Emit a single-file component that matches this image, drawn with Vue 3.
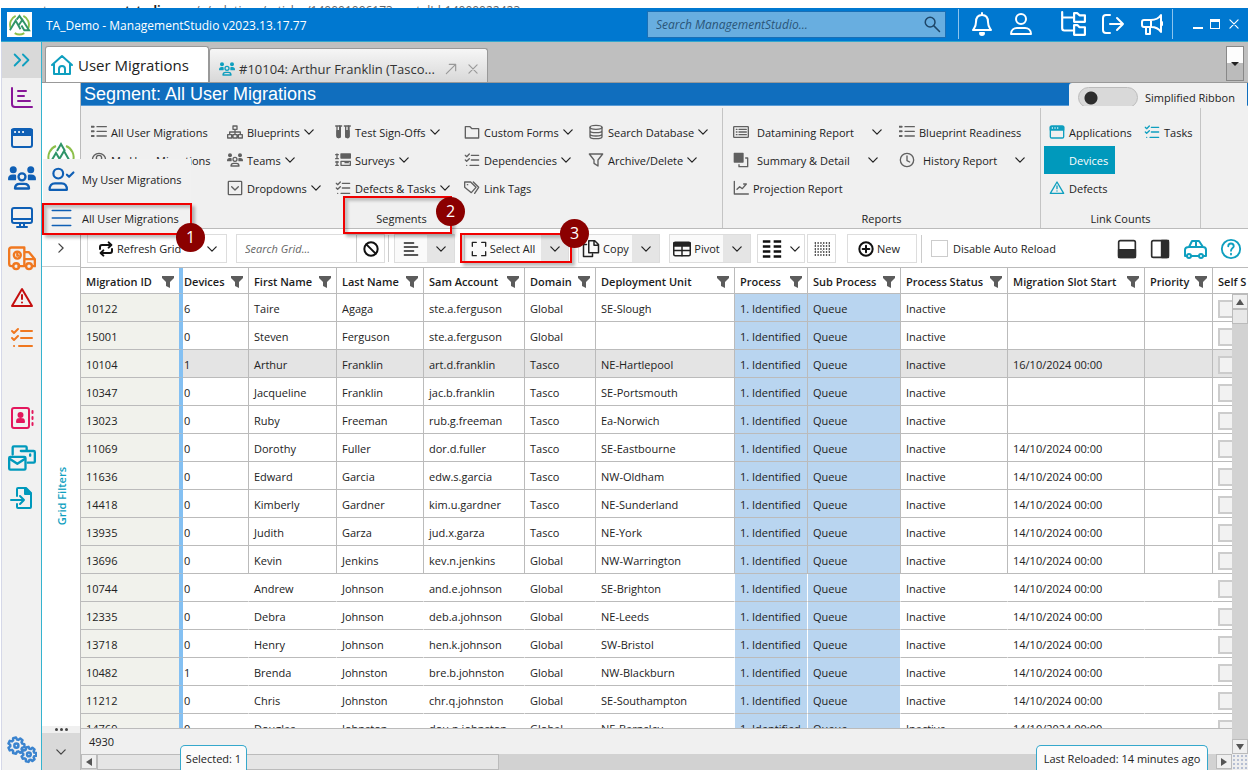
<script setup>
import { ref } from 'vue'

function gear(cx, cy, r) {
  const teeth = 7
  const step = (Math.PI * 2) / teeth
  const points = []
  for (let n = 0; n < teeth; n++) {
    for (const [offset, radius] of [[-0.36, r * 0.76], [-0.2, r], [0.2, r], [0.36, r * 0.76]]) {
      const a = (n + offset) * step
      points.push((cx + radius * Math.cos(a)).toFixed(1) + ' ' + (cy + radius * Math.sin(a)).toFixed(1))
    }
  }
  return `<path d="M${points.join('L')}z"/><circle cx="${cx}" cy="${cy}" r="${r * 0.25}"/>`
}

const icons = {
  chevrons: '<path d="M4 6l6 6-6 6M13 6l6 6-6 6"/>',
  chart: '<path d="M2 2v16a3 3 0 0 0 3 3h17M8 5h8M8 10h6M8 15h12"/>',
  window: '<rect x="2" y="3" width="20" height="18" rx="2"/><path d="M2 4h20v5H2z" fill="currentColor"/><path d="M5 6h.1M9 6h.1M13 6h.1" stroke="#fff"/>',
  users: '<circle cx="12" cy="11" r="3"/><path d="M6 21c0-3 2-4 4-4h4c2 0 4 1 4 4z"/><circle cx="4.500" cy="5" r="2" fill="currentColor"/><circle cx="19.500" cy="5" r="2" fill="currentColor"/><path d="M1 13c0-2 1-3 3-3h2v3zM23 13c0-2-1-3-3-3h-2v3z" fill="currentColor"/>',
  monitor: '<rect x="2" y="2" width="20" height="15" rx="2"/><path d="M2 13h20M10 17v4M14 17v4M7 21h10"/>',
  truck: '<path d="M4 19H3a2 2 0 0 1-2-2V5a2 2 0 0 1 2-2h11v16H9M14 7h4l5 6v6h-2M14 13h9"/><circle cx="7" cy="19" r="2.500"/><circle cx="18" cy="19" r="2.500"/><circle cx="8" cy="9.500" r="3"/><path d="M8 8v2h1"/>',
  warning: '<path d="M12 3L2 20h20z"/><path d="M12 9v4M12 16.500v.1"/>',
  tasks: '<path d="M2 5l2 2 4-4M2 12l2 2 4-4M11 5h11M11 12h11M4 20h.1M9 20h13"/>',
  book: '<rect x="2" y="2" width="17" height="20" rx="2"/><circle cx="10.500" cy="9" r="2" fill="currentColor"/><path d="M7 16c0-3 1-3 3.500-3s3.500 0 3.500 3z" fill="currentColor"/><path d="M22.500 5v2M22.500 11v2M22.500 17v2"/>',
  mails: '<path d="M4 9V3a1 1 0 0 1 1-1h10a1 1 0 0 1 1 1v2M11 6h11a1 1 0 0 1 1 1v8a1 1 0 0 1-1 1h-5M19 9v1"/><rect x="1" y="11" width="14" height="11" rx="1"/><path d="M2 13l6 4 6-4"/>',
  fileIn: '<path d="M7 10V3a1 1 0 0 1 1-1h8l5 5v14a1 1 0 0 1-1 1H8a1 1 0 0 1-1-1v-3M1 14h13M10 10l4 4-4 4"/><path d="M15 2v6h6z" fill="currentColor"/>',
  gears: gear(7.5, 8.5, 6.5) + gear(17.5, 15.5, 6),
  home: '<path d="M2 12L12 3l10 9M4 11v10h16V11M9 21v-5a3 3 0 0 1 6 0v5"/>',
  popout: '<path d="M4 20L20 4M9 4h11v11"/>',
  cross: '<path d="M5 5l14 14M19 5L5 19"/>',
  search: '<circle cx="9.500" cy="9.500" r="6.500"/><path d="M14.500 14.500L22 22"/>',
  bell: '<path d="M12 3c-4 0-6 3-6 7 0 5-2 6-3 8h18c-1-2-3-3-3-8 0-4-2-7-6-7zM12 1v2"/><path d="M10 21a2 2 0 0 0 4 0z" fill="currentColor"/>',
  person: '<circle cx="12" cy="7" r="5"/><path d="M2 22c0-4 3-6 6-6h8c3 0 6 2 6 6z"/>',
  tree: '<path d="M2 1v15a2 2 0 0 0 2 2h8M2 6h10"/><path d="M13 2h3l2 2h5v6H13zM13 13h3l2 2h5v7H13z"/>',
  exit: '<path d="M9 3H5a3 3 0 0 0-3 3v12a3 3 0 0 0 3 3h4M9 12h13M16 6l6 6-6 6"/>',
  horn: '<path d="M4 8h7c5 0 8-2 10-5v17c-2-3-5-5-10-5H4a2 2 0 0 1-2-2v-3a2 2 0 0 1 2-2zM11 8v7M6 15v7h4v-7M22 10v3"/>',
  list: '<path d="M9 4h14M9 11h14M9 18h14"/><path d="M1 4h3M1 11h3M1 18h3" stroke-width="3"/>',
  userRing: '<circle cx="12" cy="12" r="10"/><circle cx="12" cy="9" r="4"/><path d="M5 19c2-5 12-5 14 0"/>',
  sitemap: '<path d="M9 3h6v5H9zM12 8v4M4 16v-4h16v4M12 12v4M1 16h6v5H1zM9 16h6v5H9zM17 16h6v5h-6z"/>',
  dropbox: '<rect x="2" y="2" width="20" height="20" rx="1"/><path d="M7 10l5 5 5-5"/>',
  tubes: '<path d="M1 3h9M14 3h9M3 3v15a2.500 2.500 0 0 0 5 0V3M16 3v15a2.500 2.500 0 0 0 5 0V3"/><path d="M3 10h5v8a2 2 0 0 1-5 0zM16 10h5v8a2 2 0 0 1-5 0zM7 3v8M20 3v8" fill="currentColor"/>',
  survey: '<path d="M1 4h4M1 10h4M3 3v6M1 15h4M1 20h4M3 14v6"/><rect x="9" y="3" width="14" height="6" fill="currentColor"/><rect x="9" y="14" width="14" height="6"/><path d="M15 16h5" />',
  folder: '<path d="M2 4h7l3 3h10v14H2z"/>',
  tags: '<path d="M1 3h9l8 8-7 8L1 11zM14 3l8 8-6 9"/><path d="M5 7h.5"/>',
  database: '<ellipse cx="12" cy="5" rx="9" ry="3"/><path d="M3 5v14c0 4 18 4 18 0V5M3 10c0 4 18 4 18 0M3 15c0 4 18 4 18 0"/>',
  funnel: '<path d="M2 3h20l-7 9v9l-6-4v-5z"/>',
  report: '<rect x="1" y="4" width="22" height="16" rx="1"/><path d="M5 8h1M5 12h1M5 16h1M9 8h11M9 12h11M9 16h11"/>',
  clone: '<rect x="2" y="2" width="13" height="13" fill="currentColor"/><path d="M19 9h3v13H9v-3"/>',
  line: '<path d="M2 2v19h21M6 14l4-4 4 3 6-7M16 6h4"/>',
  clock: '<circle cx="12" cy="12" r="10"/><path d="M12 6v7l4 2"/>',
  userCheck: '<circle cx="9" cy="7" r="4.500"/><path d="M1 22c0-4 2-6 5-6h6c3 0 5 2 5 6zM17 8l2 2 4-4"/>',
  lines: '<path d="M1 3h22M1 12h22M1 21h22"/>',
  refresh: '<path d="M3 12V9c0-2 1-3 3-3h13M16 2l4 4-4 4M21 12v3c0 2-1 3-3 3H5M8 14l-4 4 4 4"/>',
  ban: '<circle cx="12" cy="12" r="10"/><path d="M5 5l14 14"/>',
  align: '<path d="M2 3h14M2 9h20M2 15h14M2 21h20"/>',
  expand: '<path d="M2 8V2h6M16 2h6v6M22 16v6h-6M8 22H2v-6"/>',
  copy: '<path d="M9 1h8l5 5v11H9zM16 1v6h6M6 6H2v16h12v-3"/>',
  grid: '<rect x="1" y="3" width="22" height="18" rx="2"/><path d="M1 4h22v4H1z" fill="currentColor"/><path d="M12 5v16M1 14h22"/>',
  columns: '<path d="M1 3h9M1 9h9M1 15h9M1 21h9M14 3h9M14 9h9M14 15h9M14 21h9" stroke-linecap="butt"/>',
  dots: '<g stroke-linecap="butt" stroke-width="2"><path d="M1 3h23M1 7.500h23M1 12h23M1 16.500h23M1 21h23" stroke-dasharray="2 2.200"/><path d="M2 5.500h23M2 14.500h23" stroke-width="1" stroke-dasharray="1 9"/></g>',
  plus: '<circle cx="12" cy="12" r="10"/><path d="M12 7v10M7 12h10"/>',
  dockBottom: '<rect x="2" y="2" width="20" height="20" rx="2"/><path d="M2 13h20v9H2z" fill="currentColor"/>',
  dockRight: '<rect x="2" y="2" width="20" height="20" rx="2"/><path d="M14 2h8v20h-8z" fill="currentColor"/>',
  car: '<path d="M4 19H2v-6c0-2 2-3 4-3l3-6h7l4 6c2 0 3 1 3 3v6h-2M8 19h8M6 10h14M13 4v6"/><circle cx="6" cy="19" r="2"/><circle cx="18" cy="19" r="2"/>',
  help: '<circle cx="12" cy="12" r="10"/><path d="M9 9c0-4 6-4 6 0 0 2-3 2-3 5M12 17v1"/>',
  down: '<path d="M2 7l10 10L22 7"/>',
  right: '<path d="M7 2l10 10L7 22"/>'
}

const rail = [
  { icon: 'chart', tone: 'purple', label: 'Dashboards' },
  { icon: 'window', tone: 'blue', label: 'Applications' },
  { icon: 'users', tone: 'blue big', label: 'Users' },
  { icon: 'monitor', tone: 'blue', label: 'Devices' },
  { icon: 'truck', tone: 'orange big', label: 'Deployment' },
  { icon: 'warning', tone: 'red', label: 'Defects' },
  { icon: 'tasks', tone: 'orange', label: 'Tasks' },
  null,
  { icon: 'book', tone: 'pink', label: 'Contacts' },
  { icon: 'mails', tone: 'teal big', label: 'Mail' },
  { icon: 'fileIn', tone: 'teal', label: 'Import' }
]

const segments = [
  [{ i: 'list', t: 'All User Migrations' }, { i: 'userRing', t: 'My User Migrations' }],
  [{ i: 'sitemap', t: 'Blueprints', d: 1 }, { i: 'users', t: 'Teams', d: 1 }, { i: 'dropbox', t: 'Dropdowns', d: 1 }],
  [{ i: 'tubes', t: 'Test Sign-Offs', d: 1 }, { i: 'survey', t: 'Surveys', d: 1 }, { i: 'tasks', t: 'Defects & Tasks', d: 1 }],
  [{ i: 'folder', t: 'Custom Forms', d: 1 }, { i: 'tasks', t: 'Dependencies', d: 1 }, { i: 'tags', t: 'Link Tags' }],
  [{ i: 'database', t: 'Search Database', d: 1 }, { i: 'funnel', t: 'Archive/Delete', d: 1 }]
]
const reports = [
  [{ i: 'report', t: 'Datamining Report', d: 1, w: 1 }, { i: 'clone', t: 'Summary & Detail', d: 1, w: 1 }, { i: 'line', t: 'Projection Report' }],
  [{ i: 'list', t: 'Blueprint Readiness' }, { i: 'clock', t: 'History Report', d: 1, w: 1 }]
]

const columns = ['Migration ID', 'Devices', 'First Name', 'Last Name', 'Sam Account', 'Domain', 'Deployment Unit',
  'Process', 'Sub Process', 'Process Status', 'Migration Slot Start', 'Priority']

const oct = '14/10/2024 00:00'
const rows = [
  ['10122', '6', 'Taire', 'Agaga', 'ste.a.ferguson', 'Global', 'SE-Slough', ''],
  ['15001', '0', 'Steven', 'Ferguson', 'ste.a.ferguson', 'Global', '', ''],
  ['10104', '1', 'Arthur', 'Franklin', 'art.d.franklin', 'Tasco', 'NE-Hartlepool', '16/10/2024 00:00'],
  ['10347', '0', 'Jacqueline', 'Franklin', 'jac.b.franklin', 'Tasco', 'SE-Portsmouth', ''],
  ['13023', '0', 'Ruby', 'Freeman', 'rub.g.freeman', 'Tasco', 'Ea-Norwich', ''],
  ['11069', '0', 'Dorothy', 'Fuller', 'dor.d.fuller', 'Tasco', 'SE-Eastbourne', oct],
  ['11636', '0', 'Edward', 'Garcia', 'edw.s.garcia', 'Tasco', 'NW-Oldham', oct],
  ['14418', '0', 'Kimberly', 'Gardner', 'kim.u.gardner', 'Tasco', 'NE-Sunderland', oct],
  ['13935', '0', 'Judith', 'Garza', 'jud.x.garza', 'Tasco', 'NE-York', oct],
  ['13696', '0', 'Kevin', 'Jenkins', 'kev.n.jenkins', 'Global', 'NW-Warrington', oct],
  ['10744', '0', 'Andrew', 'Johnson', 'and.e.johnson', 'Global', 'SE-Brighton', oct],
  ['12335', '0', 'Debra', 'Johnson', 'deb.a.johnson', 'Global', 'NE-Leeds', oct],
  ['13718', '0', 'Henry', 'Johnson', 'hen.k.johnson', 'Global', 'SW-Bristol', oct],
  ['10482', '1', 'Brenda', 'Johnston', 'bre.b.johnston', 'Global', 'NW-Blackburn', oct],
  ['11212', '0', 'Chris', 'Johnston', 'chr.q.johnston', 'Global', 'SE-Southampton', oct],
  ['14769', '0', 'Douglas', 'Johnston', 'dou.n.johnston', 'Global', 'NE-Barnsley', oct]
].map(r => [...r.slice(0, 7), '1. Identified', 'Queue', 'Inactive', r[7], ''])

const selected = ref(2)
const simplified = ref(false)
const noReload = ref(false)
</script>

<template>
  <div class="page">
    <div class="address"><span>support.<b>managementstudio</b>.com/a/solutions/articles/140001096173-portalId-14000022423</span></div>

    <header class="titlebar">
      <svg class="logo" viewBox="0 0 26 26"><path d="M4 17a10 10 0 0 1 5-13M17 4a10 10 0 0 1 5 13M8 22a10 10 0 0 0 10 0" class="g1" /><path d="M3 19l6-10 5 9M10 8l3-4 4 6M12 14l4-6 7 11h-5l-3-5" class="g2" /></svg>
      <span class="apptitle">TA_Demo - ManagementStudio v2023.13.17.77</span>
      <div class="topsearch">
        <input type="search" placeholder="Search ManagementStudio..." aria-label="Search ManagementStudio">
        <svg class="ic s18" viewBox="0 0 24 24" v-html="icons.search" />
      </div>
      <div class="topicons">
        <button aria-label="Notifications"><svg class="ic s24" viewBox="0 0 24 24" v-html="icons.bell" /></button>
        <button aria-label="Account"><svg class="ic s24" viewBox="0 0 24 24" v-html="icons.person" /></button>
        <button aria-label="Folders" class="tree"><svg class="ic s26" viewBox="0 0 24 24" v-html="icons.tree" /></button>
        <button aria-label="Sign out"><svg class="ic s24" viewBox="0 0 24 24" v-html="icons.exit" /></button>
        <button aria-label="Announcements"><svg class="ic s24" viewBox="0 0 24 24" v-html="icons.horn" /></button>
      </div>
      <div class="winbtns">
        <button aria-label="Minimise"><i class="min" /></button>
        <button aria-label="Maximise"><i class="max" /></button>
        <button aria-label="Close"><svg class="ic s14" viewBox="0 0 24 24" v-html="icons.cross" /></button>
      </div>
    </header>

    <div class="body">
      <nav class="rail">
        <button class="railtop" aria-label="Expand"><svg class="ic" viewBox="0 0 24 24" v-html="icons.chevrons" /></button>
        <template v-for="(r, n) in rail" :key="n">
          <button v-if="r" :class="r.tone" :aria-label="r.label"><svg class="ic" viewBox="0 0 24 24" v-html="icons[r.icon]" /></button>
          <span v-else class="railgap" />
        </template>
        <button class="gears" aria-label="Settings"><svg class="ic" viewBox="0 0 24 24" v-html="icons.gears" /></button>
      </nav>

      <div class="content">
        <div class="tabs">
          <button class="tab active"><svg class="ic s24 c-teal" viewBox="0 0 24 24" v-html="icons.home" />User Migrations</button>
          <div class="tab second">
            <svg class="ic s16 c-teal" viewBox="0 0 24 24" v-html="icons.users" />
            <span class="tabname">#10104: Arthur Franklin (Tasco...</span>
            <button aria-label="Pop out"><svg class="ic s14" viewBox="0 0 24 24" v-html="icons.popout" /></button>
            <button aria-label="Close tab"><svg class="ic s14" viewBox="0 0 24 24" v-html="icons.cross" /></button>
          </div>
          <button class="tabmenu" aria-label="Tab list"><i /></button>
        </div>

        <div class="work">
          <aside class="side">
            <div class="sidelogo">
              <svg viewBox="0 0 28 28"><path d="M2 20a12 12 0 0 1 7-15M19 5a12 12 0 0 1 7 15" class="g1" /><path d="M2 24l7-12 6 10M10 10l4-7 4 7M13 17l4-7 8 14" class="g2" /></svg>
            </div>
            <button class="sideopen" aria-label="Show filters"><svg class="ic s10" viewBox="0 0 24 24" v-html="icons.right" /></button>
            <div class="filters"><span>Grid Filters</span></div>
            <div class="grip"><i /><i /><i /></div>
            <button class="sidedown" aria-label="More"><svg class="ic s10" viewBox="0 0 24 24" v-html="icons.down" /></button>
          </aside>

          <main class="main">
            <div class="heading">
              <h1>Segment: All User Migrations</h1>
              <label class="simple"><input v-model="simplified" type="checkbox" class="toggle">Simplified Ribbon</label>
            </div>

            <div class="ribbon">
              <section class="group seg">
                <div class="cols">
                  <div v-for="(c, n) in segments" :key="n" class="rcol">
                    <button v-for="b in c" :key="b.t"><svg class="ic s16" viewBox="0 0 24 24" v-html="icons[b.i]" />{{ b.t }}<svg v-if="b.d" class="ic s10" viewBox="0 0 24 24" v-html="icons.down" /></button>
                  </div>
                </div>
                <h2>Segments</h2>
              </section>
              <section class="group rep">
                <div class="cols">
                  <div v-for="(c, n) in reports" :key="n" class="rcol">
                    <button v-for="b in c" :key="b.t" :class="{ wide: b.w }"><svg class="ic s16" viewBox="0 0 24 24" v-html="icons[b.i]" />{{ b.t }}<svg v-if="b.d" class="ic s10" viewBox="0 0 24 24" v-html="icons.down" /></button>
                  </div>
                </div>
                <h2>Reports</h2>
              </section>
              <section class="group link">
                <div class="cols">
                  <div class="rcol">
                    <button><svg class="ic s16" viewBox="0 0 24 24" v-html="icons.window" />Applications</button>
                    <button class="on">Devices</button>
                    <button><svg class="ic s16" viewBox="0 0 24 24" v-html="icons.warning" />Defects</button>
                  </div>
                  <div class="rcol"><button><svg class="ic s16" viewBox="0 0 24 24" v-html="icons.tasks" />Tasks</button></div>
                </div>
                <h2>Link Counts</h2>
              </section>
            </div>

            <div class="toolbar">
              <button class="tb refresh"><svg class="ic s16 bold" viewBox="0 0 24 24" v-html="icons.refresh" />Refresh Grid<svg class="ic s10 end" viewBox="0 0 24 24" v-html="icons.down" /></button>
              <div class="gridsearch">
                <input type="search" placeholder="Search Grid..." aria-label="Search Grid">
                <button aria-label="Clear search"><svg class="ic s16 bold" viewBox="0 0 24 24" v-html="icons.ban" /></button>
              </div>
              <div class="split alignb"><button aria-label="Align"><svg class="ic s16" viewBox="0 0 24 24" v-html="icons.align" /></button><button class="dd" aria-label="Align options"><svg class="ic s10" viewBox="0 0 24 24" v-html="icons.down" /></button></div>
              <div class="split selb"><button><svg class="ic s16" viewBox="0 0 24 24" v-html="icons.expand" />Select All</button><button class="dd" aria-label="Select options"><svg class="ic s10" viewBox="0 0 24 24" v-html="icons.down" /></button></div>
              <div class="split copyb"><button><svg class="ic s18" viewBox="0 0 24 24" v-html="icons.copy" />Copy</button><button class="dd" aria-label="Copy options"><svg class="ic s10" viewBox="0 0 24 24" v-html="icons.down" /></button></div>
              <div class="split copyb"><button><svg class="ic s18" viewBox="0 0 24 24" v-html="icons.grid" />Pivot</button><button class="dd" aria-label="Pivot options"><svg class="ic s10" viewBox="0 0 24 24" v-html="icons.down" /></button></div>
              <div class="pair">
                <button class="tb colb" aria-label="Columns"><svg class="ic s20 bold" viewBox="0 0 24 24" v-html="icons.columns" /><svg class="ic s10" viewBox="0 0 24 24" v-html="icons.down" /></button>
                <button class="tb dotb" aria-label="Cells"><svg class="ic s16" viewBox="0 0 24 24" v-html="icons.dots" /></button>
              </div>
              <button class="tb new"><svg class="ic s16 bold" viewBox="0 0 24 24" v-html="icons.plus" />New</button>
              <label class="reload"><input v-model="noReload" type="checkbox">Disable Auto Reload</label>
              <div class="tools">
                <button aria-label="Dock bottom"><svg class="ic s20" viewBox="0 0 24 24" v-html="icons.dockBottom" /></button>
                <button aria-label="Dock right"><svg class="ic s20" viewBox="0 0 24 24" v-html="icons.dockRight" /></button>
                <button class="c-teal" aria-label="Vehicle"><svg class="ic s24" viewBox="0 0 24 24" v-html="icons.car" /></button>
                <button class="c-teal" aria-label="Help"><svg class="ic s22" viewBox="0 0 24 24" v-html="icons.help" /></button>
              </div>
            </div>

            <div class="gridwrap">
              <div class="viewport">
                <table>
                  <colgroup><col v-for="n in 13" :key="n" :class="'c' + n"></colgroup>
                  <thead>
                    <tr>
                      <th v-for="c in columns" :key="c" scope="col"><span class="th">{{ c }}<svg viewBox="0 0 12 12"><path d="M0 0h12v2L8 6v6L4 10V6L0 2z" /></svg></span></th>
                      <th scope="col">Self S</th>
                    </tr>
                  </thead>
                  <tbody>
                    <tr v-for="(r, n) in rows" :key="r[0]" :class="{ sel: n === selected, open: n > 9 }" @click="selected = n">
                      <td v-for="(v, k) in r" :key="k">{{ v }}</td>
                      <td><input type="checkbox" :aria-label="'Self service ' + r[0]"></td>
                    </tr>
                  </tbody>
                </table>
              </div>
              <div class="total">4930</div>
              <div class="vbar"><button aria-label="Scroll up"><i class="up" /></button><span /><button class="last" aria-label="Scroll down"><i class="dn" /></button></div>
            </div>
            <div class="hbar">
              <button aria-label="Scroll left"><i class="lf" /></button><span class="hthumb" />
              <button class="last" aria-label="Scroll right"><i class="rt" /></button><span class="corner" />
              <div class="chip left">Selected: 1</div>
              <div class="chip right">Last Reloaded: 14 minutes ago</div>
            </div>
          </main>
        </div>
      </div>
    </div>

    <div class="flyout">
      <button><svg class="ic fly" viewBox="0 0 24 24" v-html="icons.userCheck" />My User Migrations</button>
      <button><svg class="ic fly slim" viewBox="0 0 24 24" v-html="icons.lines" />All User Migrations</button>
    </div>
    <div class="mark m1" /><div class="mark m2" /><div class="mark m3" />
    <div class="num n1">1</div><div class="num n2">2</div><div class="num n3">3</div>
  </div>
</template>

<style>
html, body { margin: 0; height: 100%; overflow: hidden; }
</style>

<style scoped>
* { box-sizing: border-box; }
.page { position: relative; height: 100vh; display: flex; flex-direction: column; font-family: "Open Sans", "Noto Sans", sans-serif; font-size: 11px; color: #222; background: #fff; overflow: hidden; padding: 0 2px 3px 1px; }
button { font: inherit; color: inherit; background: none; border: 0; padding: 0; display: flex; align-items: center; white-space: nowrap; cursor: pointer; }
input { font: inherit; margin: 0; }
.ic { fill: none; stroke: currentColor; stroke-width: 2; stroke-linejoin: round; stroke-linecap: round; flex: none; display: block; }
.s10 { width: 10px; height: 10px; stroke-width: 3; }
.s14 { width: 14px; height: 14px; }
.s16 { width: 16px; height: 16px; }
.s18 { width: 18px; height: 18px; }
.s20 { width: 20px; height: 20px; }
.s22 { width: 22px; height: 22px; }
.s24 { width: 24px; height: 24px; }
.s26 { width: 26px; height: 26px; }
.bold { stroke-width: 3; color: #111; }
.c-teal { color: #0f9fbf; }

.address { height: 8px; flex: none; overflow: hidden; padding: 3px 0 0 2px; color: #666; font-size: 12px; line-height: 16px; white-space: nowrap; }
.address b { color: #222; }

.titlebar { height: 34px; flex: none; background: #0078d0; border-bottom: 1px solid #35a8cc; display: flex; align-items: center; color: #fff; padding-bottom: 1px; }
.logo { width: 25px; height: 25px; background: #fff; margin-left: 6px; fill: none; stroke-width: 2; }
.g1 { stroke: #8cbf4a; }
.g2 { stroke: #2f9468; }
.apptitle { font-size: 12px; margin: 3px 0 0 14px; }
.topsearch { margin-left: auto; width: 299px; height: 27px; background: #68aee0; border: 1px solid #1a6fb5; display: flex; align-items: center; padding: 0 4px 0 6px; color: #1e4668; }
.topsearch input { flex: 1; min-width: 0; background: none; border: 0; outline: 0; font-style: italic; font-size: 12px; }
.topsearch input::placeholder { color: #2a5578; opacity: 1; }
.topicons { display: flex; align-items: center; margin-left: 12px; padding: 0 8px 0 11px; height: 30px; border: 1px solid #8cc4ee; border-width: 0 1px; gap: 15px; }
.topicons .tree { margin-left: 12px; }
.winbtns { display: flex; align-items: center; gap: 7px; margin: 0 7px 0 20px; }
.min { width: 10px; height: 2px; background: #fff; margin-top: 8px; }
.max { width: 10px; height: 10px; border: 1px solid #fff; border-top-width: 3px; }

.body { flex: 1; min-height: 0; display: flex; }
.rail { width: 41px; flex: none; background: #f1f1f1; border-right: 1px solid #35b3cf; border-left: 1px solid #d5d8e8; display: flex; flex-direction: column; }
.rail button, .railgap { height: 40px; flex: none; justify-content: center; }
.rail svg { width: 24px; height: 24px; }
.rail .big svg { width: 28px; height: 28px; }
.rail .railtop { height: 36px; background: #d9d9d9; color: #0f9fbf; }
.rail .railtop svg { width: 22px; height: 22px; }
.purple { color: #881798; }
.blue { color: #0f5fb5; }
.orange { color: #f07820; }
.red { color: #c50f0f; }
.pink { color: #e3175d; }
.teal { color: #0099bc; }
.rail .gears { margin-top: auto; color: #3b84cf; }
.rail .gears svg { width: 30px; height: 30px; }

.content { flex: 1; min-width: 0; display: flex; flex-direction: column; }
.tabs { height: 41px; flex: none; background: #bfbfbf; display: flex; align-items: flex-end; padding-left: 3px; border-bottom: 1px solid #999; }
.tab { border: 1px solid #999; border-bottom: 0; border-radius: 3px 3px 0 0; display: flex; align-items: center; }
.tab.active { width: 164px; height: 36px; background: #fff; font-size: 15px; padding-left: 4px; gap: 4px; }
.tab.second { width: 279px; height: 34px; background: linear-gradient(#f6f6f6, #d8d8d8); font-size: 13px; padding: 6px 7px 0 9px; color: #333; }
.tabname { margin: 0 auto 0 4px; }
.second button { color: #999; margin-left: 8px; }
.tabmenu { margin: 0 4px 1px auto; width: 18px; height: 35px; border: 1px solid #888; background: linear-gradient(#fdfdfd 50%, #bbb 50%); justify-content: center; }
.tabmenu i { border: 4px solid transparent; border-top-color: #222; border-bottom: 0; }

.work { flex: 1; min-height: 0; display: flex; }
.side { width: 39px; flex: none; border-right: 1px solid #bbb; display: flex; flex-direction: column; background: #fff; }
.sidelogo { height: 147px; border-bottom: 1px solid #ccc; padding: 58px 5px 0; flex: none; }
.sidelogo svg { width: 28px; height: 28px; fill: none; stroke-width: 2; }
.sideopen, .sidedown { height: 37px; flex: none; justify-content: center; border-bottom: 1px solid #ccc; color: #444; }
.filters { flex: 1; min-height: 0; display: flex; justify-content: center; align-items: center; }
.filters span { writing-mode: vertical-rl; rotate: 180deg; color: #0f9fbf; font-weight: 600; font-size: 11px; }
.grip { height: 7px; background: #f0f0f0; display: flex; justify-content: center; align-items: center; gap: 2px; }
.grip i { width: 3px; height: 3px; border-radius: 50%; background: #444; }
.sidedown { background: #d9d9d9; border: 0; }

.main { flex: 1; min-width: 0; display: flex; flex-direction: column; }
.heading { height: 23px; flex: none; background: #106ebe; display: flex; justify-content: space-between; border-bottom: 1px solid #5a9bd5; }
h1 { margin: 0 3px; font: 18px/23px "Liberation Sans", Arial, sans-serif; color: #fff; }
.simple { width: 178px; height: 24px; background: #f0f0f0; display: flex; align-items: center; padding: 4px 0 0 9px; gap: 7px; margin-right: 1px; border-radius: 3px 0 0 0; white-space: nowrap; }
.toggle { appearance: none; width: 60px; height: 21px; border: 1px solid #bbb; border-radius: 11px; background: radial-gradient(circle at 12px 10px, #2d2d2d 6px, #d9d9d9 7px); }

.ribbon { height: 123px; flex: none; background: #f0f0f0; border-bottom: 1px solid #bbb; display: flex; }
.group { border-right: 1px solid #c4c4c4; padding-top: 10px; margin-top: 2px; display: flex; flex-direction: column; }
.seg { width: 642px; }
.rep { width: 318px; }
.link { width: 160px; }
.cols { display: flex; height: 84px; padding-left: 10px; }
.link .cols { padding-left: 3px; }
.rcol { display: flex; flex-direction: column; flex: none; }
.rcol button { height: 28px; gap: 4px; }
.rcol button svg:first-child { color: #606060; }
.seg .rcol:nth-child(1) { width: 136px; }
.seg .rcol:nth-child(2) { width: 108px; }
.seg .rcol:nth-child(3) { width: 129px; }
.seg .rcol:nth-child(4) { width: 124px; }
.rep .rcol:nth-child(1) { width: 166px; }
.rcol .wide { gap: 8px; }
.wide svg:last-child { margin-left: 10px; }
.link .rcol:nth-child(1) { width: 96px; }
.link .rcol button { padding-left: 5px; }
.link .rcol button svg:first-child { color: #0f9fbf; }
.link .rcol:nth-child(2) button { padding-left: 4px; }
.link .rcol .on { background: #0099bc; color: #fff; width: 71px; padding-left: 25px; }
h2 { margin: 8px 0 0; font-size: 11px; font-weight: 400; line-height: 18px; text-align: center; }

.toolbar { height: 39px; flex: none; border-bottom: 1px solid #bbb; display: flex; align-items: center; gap: 9px; padding: 1px 0 0 6px; background: #fff; white-space: nowrap; }
.tb, .split, .gridsearch { height: 29px; border: 1px solid #ddd; flex: none; }
.refresh { width: 140px; padding: 0 9px 0 10px; gap: 3px; }
.refresh .end { margin-left: auto; }
.gridsearch { width: 149px; display: flex; position: relative; }
.gridsearch::after { content: ""; position: absolute; right: -5px; top: 0; bottom: 0; border-right: 1px solid #ccc; }
.gridsearch input { flex: 1; min-width: 0; border: 0; outline: 0; padding: 0 8px; font-style: italic; }
.gridsearch input::placeholder { color: #666; opacity: 1; }
.gridsearch button { width: 28px; justify-content: center; border-left: 1px solid #ccc; }
.split { display: flex; background: #fafafa; }
.split button { flex: 1; justify-content: center; gap: 3px; }
.split .dd { flex: 0 0 27px; background: #e5e5e5; }
.alignb { width: 61px; }
.selb { width: 105px; }
.copyb { width: 82px; }
.pair { display: flex; gap: 2px; margin-left: -3px; }
.colb { width: 48px; justify-content: center; gap: 8px; }
.dotb { width: 29px; justify-content: center; }
.new { width: 70px; padding-left: 10px; gap: 3px; margin-left: 2px; }
.reload { display: flex; align-items: center; gap: 5px; border-left: 1px solid #ccc; height: 28px; padding-left: 9px; margin-left: -5px; }
.reload input { appearance: none; width: 17px; height: 17px; border: 1px solid #ccc; background: #fff; }
.tools { margin-left: auto; display: flex; align-items: center; gap: 13px; padding-right: 6px; color: #2d2d2d; }

.gridwrap { flex: 1; min-height: 0; position: relative; display: flex; flex-direction: column; background: #fff; }
.viewport { flex: 1; min-height: 0; overflow: hidden; }
table { width: 100%; table-layout: fixed; border-collapse: separate; border-spacing: 0; }
.c1 { width: 102px; }
.c2 { width: 66px; }
.c3 { width: 88px; }
.c4 { width: 87px; }
.c5 { width: 101px; }
.c6 { width: 71px; }
.c7 { width: 139px; }
.c8 { width: 73px; }
.c9 { width: 93px; }
.c10 { width: 107px; }
.c11 { width: 137px; }
.c12 { width: 68px; }
th, td { padding: 2px 0 0 5px; text-align: left; white-space: nowrap; overflow: hidden; border-right: 1px solid #bbb; border-bottom: 1px solid #bbb; }
th { height: 26px; font-weight: 600; color: #1c1c1c; }
.th { display: flex; align-items: center; justify-content: space-between; padding-right: 5px; }
.th svg { width: 12px; height: 12px; fill: #5c5c5c; flex: none; }
td { height: 28px; }
th:first-child, td:first-child { border-right: 4px solid #84c0f2; }
td:first-child { background: #f1f2ec; }
th:nth-child(2), td:nth-child(2) { padding-left: 1px; }
th:last-child, td:last-child { border-right: 0; }
td:nth-child(8), td:nth-child(9) { background: #b9d5f0; }
.sel td { background: #e4e4e4; }
.sel td:first-child { background: #f1f2ec; }
.sel td:nth-child(8), .sel td:nth-child(9) { background: #b9d5f0; }
.open td:not(:first-child) { border-right-color: #fff; }
td input { appearance: none; display: block; width: 18px; height: 18px; border: 2px solid #ccc; background: #f2f2f2; }
.total { height: 26px; flex: none; background: #f0f0f0; border-top: 1px solid #bbb; padding-left: 8px; line-height: 26px; }
.vbar { position: absolute; right: 0; top: 26px; bottom: 0; width: 16px; background: #d2d2d2; display: flex; flex-direction: column; }
.vbar button, .hbar button { width: 16px; height: 15px; flex: none; border: 1px solid #bbb; background: #efefef; justify-content: center; }
.vbar span { height: 15px; background: #e8e8e8; border: 1px solid #bbb; }
.vbar .last { margin-top: auto; }
.hbar { height: 16px; flex: none; position: relative; display: flex; background: #d2d2d2; }
.hbar .last { margin-left: auto; }
.hthumb { width: 402px; background: #e5e5e5; border: 1px solid #bbb; }
.corner { width: 16px; background: radial-gradient(circle, #b6bfd3 1px, transparent 1px) 0 0 / 4px 4px #eee; }
.up, .dn, .lf, .rt { border: 4px solid transparent; }
.up { border-bottom: 6px solid #555; border-top: 0; }
.dn { border-top: 6px solid #555; border-bottom: 0; }
.lf { border-right: 6px solid #555; border-left: 0; }
.rt { border-left: 6px solid #555; border-right: 0; }
.chip { position: absolute; bottom: 0; height: 25px; line-height: 25px; background: #fbfbfb; border: 1px solid #35a8cc; border-bottom: 0; border-radius: 5px 5px 0 0; text-align: center; white-space: nowrap; }
.chip.left { left: 99px; width: 67px; }
.chip.right { right: 40px; width: 172px; }

.flyout { position: absolute; left: 43px; top: 159px; width: 148px; background: #f1f1f1; }
.flyout button { height: 40px; width: 100%; padding-left: 4px; gap: 6px; }
.fly { width: 29px; height: 26px; color: #0f5fb5; }
.slim { height: 20px; }
.flyout button:last-child { height: 30px; margin-top: 4px; }
.mark { position: absolute; border: 2px solid #f00000; box-shadow: 3px 3px 3px #0004, inset 3px 3px 3px #0003; pointer-events: none; }
.m1 { left: 42px; top: 203px; width: 150px; height: 32px; }
.m2 { left: 343px; top: 196px; width: 109px; height: 38px; }
.m3 { left: 460px; top: 233px; width: 112px; height: 30px; }
.num { position: absolute; width: 29px; height: 29px; border-radius: 50%; background: #8b0000; color: #fff; font-size: 16px; line-height: 28px; text-align: center; }
.n1 { left: 176px; top: 223px; }
.n2 { left: 436px; top: 197px; }
.n3 { left: 560px; top: 219px; }
</style>
